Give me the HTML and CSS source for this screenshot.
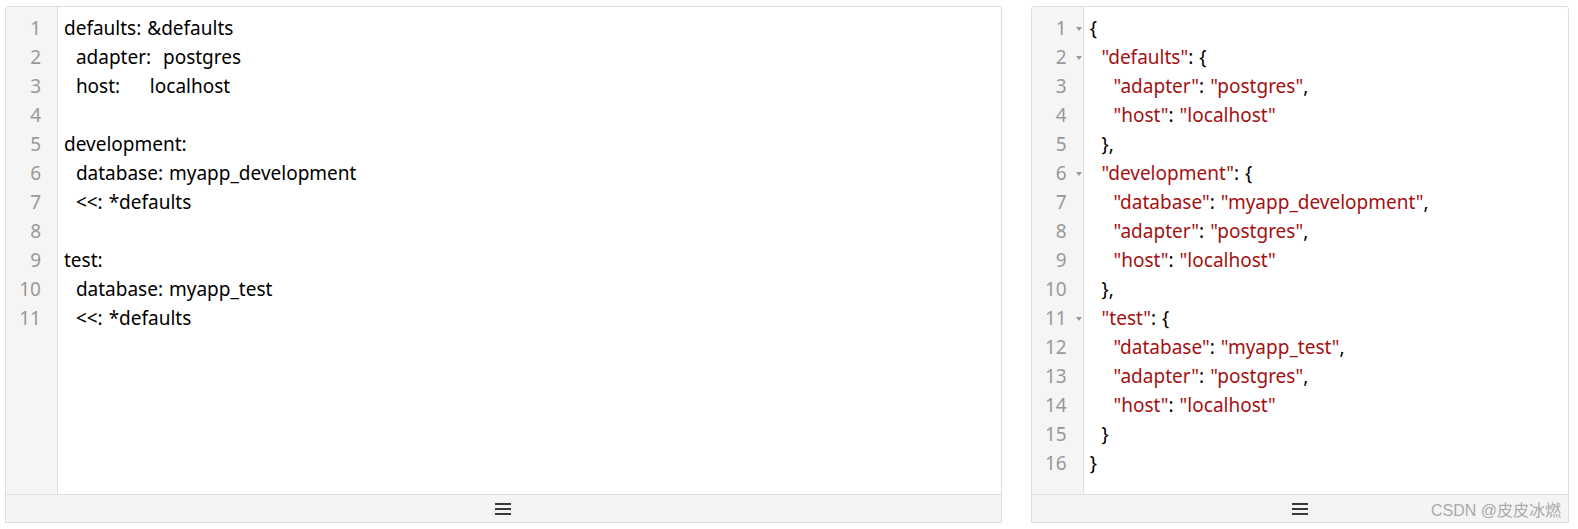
FILE: index.html
```html
<!DOCTYPE html>
<html>
<head>
<meta charset="utf-8">
<link rel="stylesheet" href="styles.css">
</head>
<body>
<div class="page">
  <div class="panel panel-left">
    <div class="editor">
      <div class="gutter">
        <div class="ln"><span class="num">1</span></div>
        <div class="ln"><span class="num">2</span></div>
        <div class="ln"><span class="num">3</span></div>
        <div class="ln"><span class="num">4</span></div>
        <div class="ln"><span class="num">5</span></div>
        <div class="ln"><span class="num">6</span></div>
        <div class="ln"><span class="num">7</span></div>
        <div class="ln"><span class="num">8</span></div>
        <div class="ln"><span class="num">9</span></div>
        <div class="ln"><span class="num">10</span></div>
        <div class="ln"><span class="num">11</span></div>
      </div>
      <div class="code">
        <div class="line">defaults: &amp;defaults</div>
        <div class="line">  adapter:  postgres</div>
        <div class="line">  host:     localhost</div>
        <div class="line"> </div>
        <div class="line">development:</div>
        <div class="line">  database: myapp_development</div>
        <div class="line">  &lt;&lt;: *defaults</div>
        <div class="line"> </div>
        <div class="line">test:</div>
        <div class="line">  database: myapp_test</div>
        <div class="line">  &lt;&lt;: *defaults</div>
      </div>
    </div>
    <div class="statusbar">
      <span class="menu-icon"><i></i><i></i><i></i></span>
    </div>
  </div>

  <div class="panel panel-right">
    <div class="editor">
      <div class="gutter">
        <div class="ln"><span class="num">1</span><span class="fold"></span></div>
        <div class="ln"><span class="num">2</span><span class="fold"></span></div>
        <div class="ln"><span class="num">3</span></div>
        <div class="ln"><span class="num">4</span></div>
        <div class="ln"><span class="num">5</span></div>
        <div class="ln"><span class="num">6</span><span class="fold"></span></div>
        <div class="ln"><span class="num">7</span></div>
        <div class="ln"><span class="num">8</span></div>
        <div class="ln"><span class="num">9</span></div>
        <div class="ln"><span class="num">10</span></div>
        <div class="ln"><span class="num">11</span><span class="fold"></span></div>
        <div class="ln"><span class="num">12</span></div>
        <div class="ln"><span class="num">13</span></div>
        <div class="ln"><span class="num">14</span></div>
        <div class="ln"><span class="num">15</span></div>
        <div class="ln"><span class="num">16</span></div>
      </div>
      <div class="code">
        <div class="line">{</div>
        <div class="line">  <span class="str">"defaults"</span>: {</div>
        <div class="line">    <span class="str">"adapter"</span>: <span class="str">"postgres"</span>,</div>
        <div class="line">    <span class="str">"host"</span>: <span class="str">"localhost"</span></div>
        <div class="line">  },</div>
        <div class="line">  <span class="str">"development"</span>: {</div>
        <div class="line">    <span class="str">"database"</span>: <span class="str">"myapp_development"</span>,</div>
        <div class="line">    <span class="str">"adapter"</span>: <span class="str">"postgres"</span>,</div>
        <div class="line">    <span class="str">"host"</span>: <span class="str">"localhost"</span></div>
        <div class="line">  },</div>
        <div class="line">  <span class="str">"test"</span>: {</div>
        <div class="line">    <span class="str">"database"</span>: <span class="str">"myapp_test"</span>,</div>
        <div class="line">    <span class="str">"adapter"</span>: <span class="str">"postgres"</span>,</div>
        <div class="line">    <span class="str">"host"</span>: <span class="str">"localhost"</span></div>
        <div class="line">  }</div>
        <div class="line">}</div>
      </div>
    </div>
    <div class="statusbar">
      <span class="menu-icon"><i></i><i></i><i></i></span>
      <span class="watermark">CSDN @皮皮冰燃</span>
    </div>
  </div>
</div>
</body>
</html>
```

FILE: styles.css
```css
html, body {
  margin: 0;
  padding: 0;
  background: #ffffff;
}

.page {
  display: flex;
  gap: 29px;
  padding: 6px 9px 6px 5px;
  height: 529px;
  box-sizing: border-box;
}

.panel {
  position: relative;
  display: flex;
  flex-direction: column;
  border: 1px solid #dddddd;
  border-radius: 3px 3px 0 0;
  background: #ffffff;
  box-sizing: border-box;
  height: 517px;
}

.panel-left {
  width: 998px;
}

.panel-right {
  width: 539px;
}

.editor {
  flex: 1;
  display: flex;
  min-height: 0;
}

.gutter {
  width: 51px;
  flex: none;
  background: #f5f5f5;
  border-right: 1px solid #dddddd;
  padding-top: 7px;
  font-family: "Noto Sans", "Open Sans", sans-serif;
  font-size: 19px;
  color: #999999;
}

.ln {
  height: 29px;
  line-height: 29px;
  display: flex;
  align-items: center;
  position: relative;
}

.num {
  width: 35px;
  text-align: right;
  box-sizing: border-box;
}

.fold {
  margin-left: 9px;
  width: 0;
  height: 0;
  border-left: 3px solid transparent;
  border-right: 3px solid transparent;
  border-top: 4px solid #9a9a9a;
}

.code {
  flex: 1;
  padding: 7px 0 0 6px;
  font-family: "Noto Sans", "Open Sans", sans-serif;
  font-size: 19px;
  word-spacing: 1px;
  color: #000000;
}

.line {
  height: 29px;
  line-height: 29px;
  white-space: pre;
}

.str {
  color: #a31111;
}

.statusbar {
  flex: none;
  height: 27px;
  border-top: 1px solid #dddddd;
  background: #f4f4f4;
  display: flex;
  align-items: center;
  justify-content: center;
  position: relative;
}

.menu-icon {
  display: flex;
  flex-direction: column;
  gap: 3px;
  width: 16px;
}

.menu-icon i {
  display: block;
  height: 2px;
  background: #383838;
}

.watermark {
  position: absolute;
  right: 7px;
  top: 50%;
  transform: translateY(-50%);
  font-family: "Liberation Sans", "Noto Sans CJK SC", sans-serif;
  font-size: 16px;
  color: #aaaaaa;
  white-space: nowrap;
}
```
